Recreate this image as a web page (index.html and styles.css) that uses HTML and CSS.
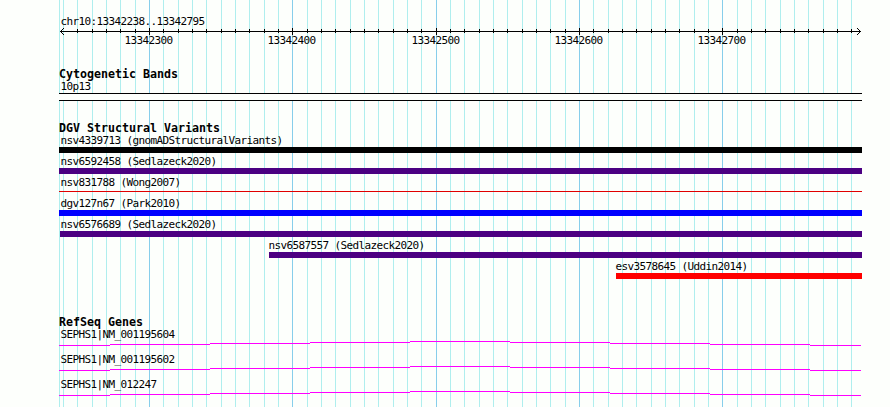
FILE: index.html
```html
<!DOCTYPE html>
<html lang="en">

<head>
    <meta charset="UTF-8">
    <title>chr10:13342238..13342795</title>
    <link rel="stylesheet" href="styles.css">
</head>

<body>
    <svg class="grid" id="grid" width="890" height="407"></svg>
    <main class="panel">
        <section class="ruler">
            <div class="label">chr10:13342238..13342795</div>
            <svg class="scale" id="scale" width="803" height="24"></svg>
        </section>

        <section class="track cytobands">
            <h2>Cytogenetic Bands</h2>
            <div class="label">10p13</div>
            <div class="band"></div>
        </section>

        <section class="track variants">
            <h2>DGV Structural Variants</h2>
            <div class="variant">
                <div class="label">nsv4339713 (gnomADStructuralVariants)</div>
                <div class="bar black"></div>
            </div>
            <div class="variant">
                <div class="label">nsv6592458 (Sedlazeck2020)</div>
                <div class="bar indigo"></div>
            </div>
            <div class="variant">
                <div class="label">nsv831788 (Wong2007)</div>
                <div class="bar thin"></div>
            </div>
            <div class="variant">
                <div class="label">dgv127n67 (Park2010)</div>
                <div class="bar blue"></div>
            </div>
            <div class="variant">
                <div class="label">nsv6576689 (Sedlazeck2020)</div>
                <div class="bar indigo clipped"></div>
            </div>
            <div class="variant" style="margin-left: 210px">
                <div class="label outer">nsv6587557 (Sedlazeck2020)</div>
                <div class="bar indigo"></div>
            </div>
            <div class="variant" style="margin-left: 557px">
                <div class="label outer">esv3578645 (Uddin2014)</div>
                <div class="bar red"></div>
            </div>
        </section>

        <section class="track genes">
            <h2>RefSeq Genes</h2>
            <div class="gene">
                <div class="label">SEPHS1|NM_001195604</div>
                <svg class="intron" width="803" height="5"></svg>
            </div>
            <div class="gene">
                <div class="label">SEPHS1|NM_001195602</div>
                <svg class="intron" width="803" height="5"></svg>
            </div>
            <div class="gene">
                <div class="label">SEPHS1|NM_012247</div>
                <svg class="intron" width="803" height="5"></svg>
            </div>
        </section>
    </main>
    <script>
        const start = 13342238;
        const end = 13342795;
        const left = 59;

        function toX(pos) {
            return Math.round(60 + (pos - start) * 800 / (end - start + 1));
        }

        function rect(x, y, width, height, cls) {
            return `<rect x="${x}" y="${y}" width="${width}" height="${height}" class="${cls}"/>`;
        }

        let grid = rect(left, 0, 1, 407, 'minor');
        let scale = rect(1, 6, 801, 1, 'ink');
        for (let pos = 13342240; pos <= end; pos += 10) {
            const x = toX(pos);
            const major = pos % 100 === 0;
            grid += rect(x, 0, 1, 407, major ? 'major' : 'minor');
            if (major) {
                scale += rect(x - left, 3, 1, 7, 'ink');
                scale += `<text x="${x - left - 24.5}" y="19">${pos}</text>`;
            } else if (pos > 13342240) {
                scale += rect(x - left, 4, 1, 4, 'ink');
            }
        }
        // arrow heads
        for (let i = 1; i <= 3; i++) {
            scale += rect(1 + i, 6 - i, 1, 1, 'ink') + rect(1 + i, 6 + i, 1, 1, 'ink');
            scale += rect(801 - i, 6 - i, 1, 1, 'ink') + rect(801 - i, 6 + i, 1, 1, 'ink');
        }
        document.getElementById('grid').innerHTML = grid;
        document.getElementById('scale').innerHTML = scale;

        // stepped intron line: [from, to, y]
        const steps = [
            [0, 51, 4], [51, 151, 3], [151, 251, 2], [251, 351, 1], [351, 451, 0],
            [451, 551, 1], [551, 651, 2], [651, 751, 3], [751, 802, 4]
        ];
        document.querySelectorAll('.intron').forEach(svg => {
            svg.innerHTML = steps.map(([a, b, y]) => rect(a, y, b - a, 1, 'magenta')).join('');
        });
    </script>
</body>

</html>
```
FILE: styles.css
```css
body {
    margin: 0;
    background-color: #fdfffc;
    color: #000;
    font-family: "DejaVu Sans Mono", monospace;
    height: 407px;
    overflow: hidden;
}

svg {
    display: block;
    shape-rendering: crispEdges;
}

.grid {
    position: absolute;
    top: 0;
    left: 0;
    z-index: -1;
}

.minor {
    fill: #afeeee;
}

.major {
    fill: #87ceeb;
}

.ink {
    fill: #000;
}

.magenta {
    fill: #f0f;
}

.panel {
    width: 803px;
    padding: 15px 0 0 59px;
}

.label,
.scale text {
    font-size: 11px;
    letter-spacing: -0.622px;
    white-space: pre;
}

.label {
    height: 13px;
    line-height: 13px;
    padding-left: 1.5px;
}

.label.outer {
    margin-left: -2px;
}

h2 {
    margin: 0;
    height: 12px;
    font-size: 11.63px;
    line-height: 13px;
    font-weight: bold;
    white-space: pre;
}

.ruler {
    height: 53px;
}

.scale {
    margin-top: -3px;
    overflow: visible;
}

.cytobands {
    height: 54px;
}

.band {
    height: 6px;
    border-top: 1px solid #000;
    border-bottom: 1px solid #000;
    background-color: #fdfffc;
}

.variants {
    height: 194px;
}

.variant {
    height: 21px;
}

.bar {
    height: 6px;
}

.black {
    background-color: #000;
}

.indigo {
    background-color: #4b0082;
}

.blue {
    background-color: #00f;
}

.red {
    background-color: #f00;
}

.thin {
    height: 1px;
    margin-top: 2px;
    background-color: #e00000;
}

.clipped {
    margin-left: 1px;
}

.gene {
    height: 25px;
}
```
